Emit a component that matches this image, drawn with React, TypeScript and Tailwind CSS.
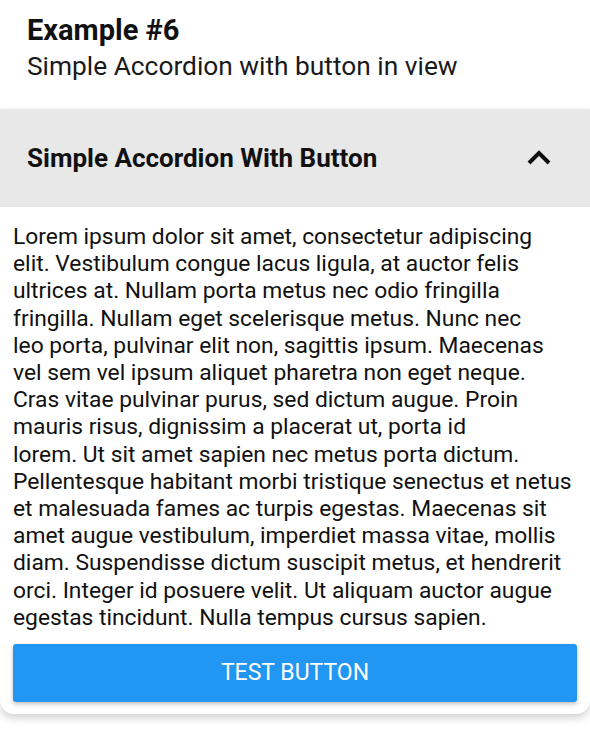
import React from 'react';

const lines = [
  'Lorem ipsum dolor sit amet, consectetur adipiscing',
  'elit. Vestibulum congue lacus ligula, at auctor felis',
  'ultrices at. Nullam porta metus nec odio fringilla',
  'fringilla. Nullam eget scelerisque metus. Nunc nec',
  'leo porta, pulvinar elit non, sagittis ipsum. Maecenas',
  'vel sem vel ipsum aliquet pharetra non eget neque.',
  'Cras vitae pulvinar purus, sed dictum augue. Proin',
  'mauris risus, dignissim a placerat ut, porta id',
  'lorem. Ut sit amet sapien nec metus porta dictum.',
  'Pellentesque habitant morbi tristique senectus et netus',
  'et malesuada fames ac turpis egestas. Maecenas sit',
  'amet augue vestibulum, imperdiet massa vitae, mollis',
  'diam. Suspendisse dictum suscipit metus, et hendrerit',
  'orci. Integer id posuere velit. Ut aliquam auctor augue',
  'egestas tincidunt. Nulla tempus cursus sapien.',
];

export default function App() {
  return (
    <div className="w-[590px] h-[735px] bg-white overflow-hidden font-['Roboto',sans-serif] text-[#111]">
      <div className="px-[27px] pt-[12px] h-[109px]">
        <h1 className="text-[29px] font-bold leading-[36px]">Example #6</h1>
        <p className="text-[26.3px] leading-[36px] text-[#1a1a1a]">Simple Accordion with button in view</p>
      </div>
      <div className="rounded-b-[14px] bg-white shadow-[0_4px_8px_rgba(0,0,0,0.18)]">
        <div className="h-[98px] bg-[#e8e8e8] flex items-center justify-between pl-[27px] pr-[38px]">
          <span className="text-[26px] font-bold">Simple Accordion With Button</span>
          <svg width="26" height="18" viewBox="0 0 26 18">
            <path d="M3 14 L13 4 L23 14" fill="none" stroke="#111" strokeWidth="4" />
          </svg>
        </div>
        <div className="px-[13px] pt-[16px] pb-[12px]">
          <p className="text-[22.8px] leading-[27.2px]">
            {lines.map((l) => (
              <span key={l} className="block whitespace-nowrap">{l}</span>
            ))}
          </p>
          <button className="mt-[13px] w-full h-[58px] bg-[#2196f3] rounded-[3px] text-white text-[23px] shadow-[0_2px_4px_rgba(0,0,0,0.25)]">
            TEST BUTTON
          </button>
        </div>
      </div>
    </div>
  );
}
